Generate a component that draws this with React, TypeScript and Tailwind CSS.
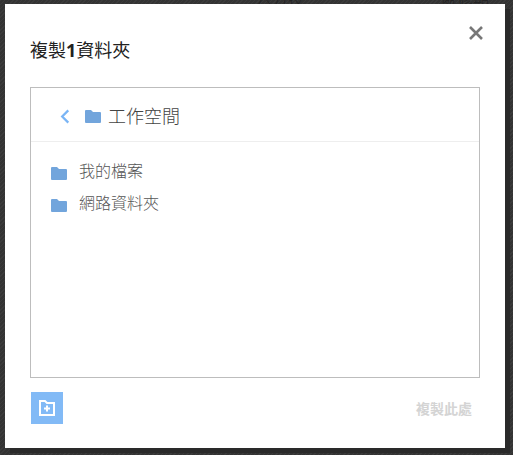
import React from "react";

function Folder({ className }: { className: string }) {
  return (
    <svg viewBox="0 0 16 13" className={className} fill="#72a5dc">
      <path d="M0 1a1 1 0 0 1 1-1h5l2 2h7a1 1 0 0 1 1 1v9a1 1 0 0 1-1 1H1a1 1 0 0 1-1-1z" />
    </svg>
  );
}

export default function App() {
  return (
    <div className="w-[513px] h-[455px] overflow-hidden bg-[#383838] bg-[repeating-linear-gradient(135deg,#3b3b3b_0px,#3b3b3b_1px,#333333_1px,#333333_3px)] relative font-['Open_Sans','Noto_Sans_CJK_TC',sans-serif]">
      <div className="absolute left-[256px] -top-[13px] text-[16px] leading-[24px] text-[#222] font-light">六方技</div>
      <div className="absolute left-[441px] -top-[13px] text-[16px] leading-[24px] text-[#222] font-light">處修期</div>
      <div className="absolute left-[5px] top-[4px] w-[500px] h-[444px] bg-white shadow-[5px_5px_0_#2a2a2a] flex flex-col px-[25px]">
        <div className="flex justify-between h-[83px]">
          <h1 className="mt-[34px] text-[18px] leading-[24px] font-normal text-[#222]">
            複製<span className="font-bold">1</span>資料夾
          </h1>
          <svg viewBox="0 0 14 14" className="w-[14px] h-[14px] mt-[22px] -mr-[3px]" stroke="#777" strokeWidth="2.6" fill="none">
            <path d="M1 1l12 12M13 1L1 13" />
          </svg>
        </div>
        <div className="w-[450px] h-[291px] border border-[#bdbdbd] flex flex-col">
          <div className="h-[54px] border-b border-[#eee] flex items-center pl-[29px] pt-[3px]">
            <svg viewBox="0 0 10 16" className="w-[10px] h-[15px]" stroke="#7ab5f5" strokeWidth="2.4" fill="none">
              <path d="M8.5 1.5L2 8l6.5 6.5" />
            </svg>
            <Folder className="w-[16px] h-[13px] ml-[15px]" />
            <span className="ml-[7px] text-[18px] font-light text-[#444] leading-[24px]">工作空間</span>
          </div>
          <div className="flex flex-col pt-[17px] pl-[20px] gap-[8px]">
            {["我的檔案", "網路資料夾"].map((t) => (
              <div key={t} className="flex items-center h-[24px]">
                <Folder className="w-[16px] h-[13px] mt-[5px]" />
                <span className="ml-[12px] text-[16px] font-light text-[#555] leading-[24px]">{t}</span>
              </div>
            ))}
          </div>
        </div>
        <div className="flex justify-between items-center mt-[14px] pl-px">
          <div className="w-[32px] h-[32px] bg-[#82baf6] flex items-center justify-center">
            <svg viewBox="0 0 16 16" className="w-[16px] h-[16px]" fill="none">
              <path d="M1 1h5l2 2h7v12H1z" stroke="#fff" strokeWidth="2" />
              <path d="M8 5.5v6M5 8.5h6" stroke="#fff" strokeWidth="2" />
            </svg>
          </div>
          <span className="text-[14px] font-bold text-[#d4d4d4] mr-[8px]">複製此處</span>
        </div>
      </div>
    </div>
  );
}
